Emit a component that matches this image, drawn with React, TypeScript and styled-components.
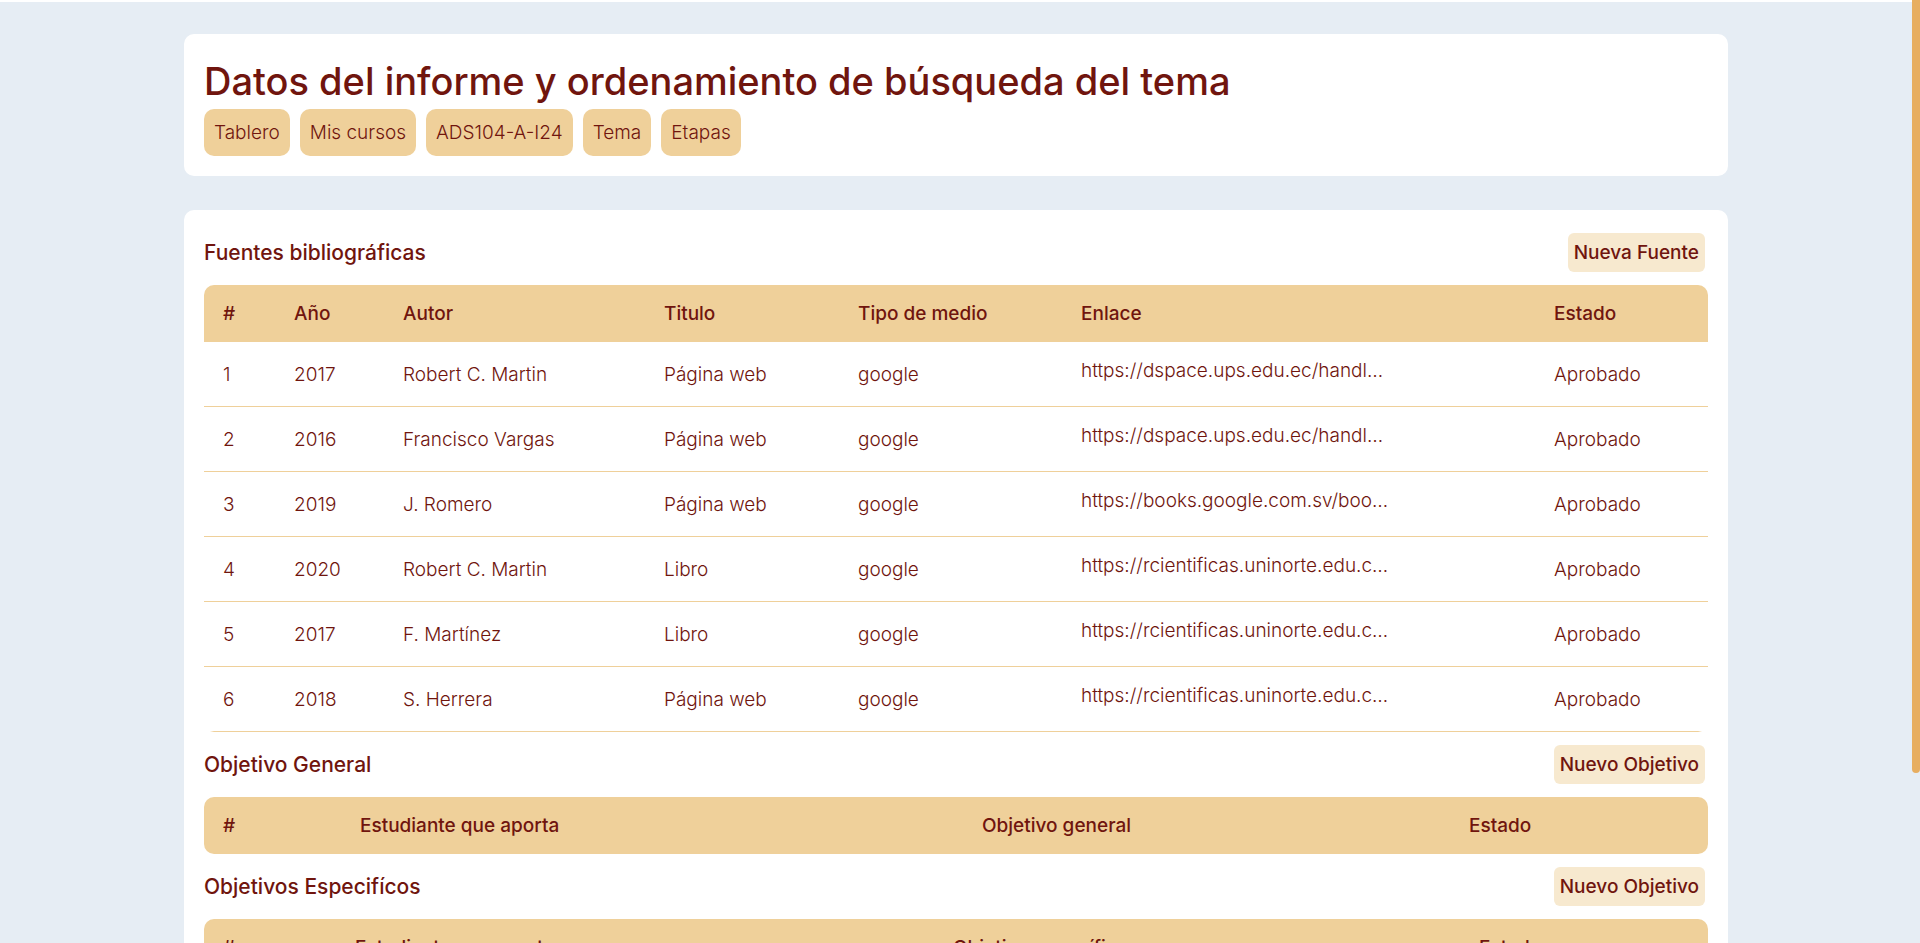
import React from "react";
import styled, { createGlobalStyle } from "styled-components";

const GlobalStyle = createGlobalStyle`
  * {
    box-sizing: border-box;
  }
  body {
    margin: 0;
    background: #ffffff;
    color: #70150e;
    font-family: Inter, "Open Sans", sans-serif;
    font-size: 19px;
    font-weight: 300;
    line-height: 27px;
  }
`;

const Shell = styled.div`
  display: flex;
  height: 100vh;
  padding-top: 2px;
  background: linear-gradient(#ffffff 2px, #e6edf4 2px);
`;

const Scroller = styled.main`
  flex: 1;
  min-width: 0;
  overflow-y: auto;
  scrollbar-width: none;
  padding: 32px 24px;
`;

const ScrollRail = styled.div`
  width: 8px;
  height: 100vh;
  margin-top: -2px;
`;

const ScrollThumb = styled.div`
  height: 82%;
  border-radius: 0 0 4px 4px;
  background: #e7ae60;
`;

const Page = styled.div`
  display: flex;
  flex-direction: column;
  gap: 34px;
  max-width: 1544px;
  margin: 0 auto;
`;

const Card = styled.section<{ $compact?: boolean }>`
  padding: ${(p) => (p.$compact ? "10px 20px" : "20px")};
  border-radius: 10px;
  background: #ffffff;
`;

const Title = styled.h1`
  margin: 0;
  font-size: 38px;
  font-weight: 550;
  line-height: 55px;
`;

const Breadcrumbs = styled.nav`
  display: flex;
  flex-wrap: wrap;
  gap: 10px;
`;

const Crumb = styled.a`
  padding: 10px;
  border-radius: 10px;
  background: #efd09a;
  color: inherit;
  text-decoration: none;
`;

const SectionHead = styled.header`
  display: flex;
  align-items: center;
  justify-content: space-between;
  height: 65px;
  padding-right: 3px;
`;

const SectionTitle = styled.h2`
  margin: 0;
  font-size: 21px;
  font-weight: 500;
  line-height: 30px;
`;

const AddButton = styled.button`
  padding: 6px;
  border: 0;
  border-radius: 6px;
  background: #f7e9cf;
  color: inherit;
  font: inherit;
  font-weight: 500;
  cursor: pointer;
`;

const TableFrame = styled.div`
  overflow: hidden;
  border-radius: 10px;
`;

const Table = styled.table`
  width: 100%;
  table-layout: fixed;
  border-collapse: separate;
  border-spacing: 0;
`;

const Col = styled.col<{ $width: number }>`
  width: ${(p) => p.$width}px;
`;

const HeadCell = styled.th`
  padding: 15px 19px;
  background: #efd09a;
  font-weight: 500;
  text-align: left;
  white-space: nowrap;
`;

const Cell = styled.td`
  height: 65px;
  padding: 0 19px;
  border-bottom: 1px solid #efd09a;
  white-space: nowrap;
`;

const SourceLink = styled.a`
  display: block;
  margin-bottom: 8px;
  color: inherit;
  text-decoration: none;
`;

interface Column {
  label: string;
  width: number;
}

const sourceColumns: Column[] = [
  { label: "#", width: 71 },
  { label: "Año", width: 109 },
  { label: "Autor", width: 261 },
  { label: "Titulo", width: 194 },
  { label: "Tipo de medio", width: 223 },
  { label: "Enlace", width: 473 },
  { label: "Estado", width: 173 },
];

const generalColumns: Column[] = [
  { label: "#", width: 137 },
  { label: "Estudiante que aporta", width: 622 },
  { label: "Objetivo general", width: 487 },
  { label: "Estado", width: 258 },
];

const specificColumns: Column[] = [
  { label: "#", width: 132 },
  { label: "Estudiante que aporta", width: 598 },
  { label: "Objetivo específico", width: 526 },
  { label: "Estado", width: 248 },
];

const sources = [
  { year: 2017, author: "Robert C. Martin", title: "Página web", link: "https://dspace.ups.edu.ec/handl…" },
  { year: 2016, author: "Francisco Vargas", title: "Página web", link: "https://dspace.ups.edu.ec/handl…" },
  { year: 2019, author: "J. Romero", title: "Página web", link: "https://books.google.com.sv/boo…" },
  { year: 2020, author: "Robert C. Martin", title: "Libro", link: "https://rcientificas.uninorte.edu.c…" },
  { year: 2017, author: "F. Martínez", title: "Libro", link: "https://rcientificas.uninorte.edu.c…" },
  { year: 2018, author: "S. Herrera", title: "Página web", link: "https://rcientificas.uninorte.edu.c…" },
];

const crumbs = ["Tablero", "Mis cursos", "ADS104-A-I24", "Tema", "Etapas"];

function DataTable({ columns, children }: { columns: Column[]; children?: React.ReactNode }) {
  return (
    <TableFrame>
      <Table>
        <colgroup>
          {columns.map((c) => (
            <Col key={c.label} $width={c.width} />
          ))}
        </colgroup>
        <thead>
          <tr>
            {columns.map((c) => (
              <HeadCell key={c.label} scope="col">
                {c.label}
              </HeadCell>
            ))}
          </tr>
        </thead>
        {children && <tbody>{children}</tbody>}
      </Table>
    </TableFrame>
  );
}

function Heading({ title, action }: { title: string; action: string }) {
  return (
    <SectionHead>
      <SectionTitle>{title}</SectionTitle>
      <AddButton type="button">{action}</AddButton>
    </SectionHead>
  );
}

export default function App() {
  return (
    <>
      <GlobalStyle />
      <Shell>
        <Scroller>
          <Page>
            <Card>
              <Title>Datos del informe y ordenamiento de búsqueda del tema</Title>
              <Breadcrumbs>
                {crumbs.map((c) => (
                  <Crumb key={c} href="#">
                    {c}
                  </Crumb>
                ))}
              </Breadcrumbs>
            </Card>
            <Card $compact>
              <Heading title="Fuentes bibliográficas" action="Nueva Fuente" />
              <DataTable columns={sourceColumns}>
                {sources.map((s, i) => (
                  <tr key={i}>
                    <Cell>{i + 1}</Cell>
                    <Cell>{s.year}</Cell>
                    <Cell>{s.author}</Cell>
                    <Cell>{s.title}</Cell>
                    <Cell>google</Cell>
                    <Cell>
                      <SourceLink href="#">{s.link}</SourceLink>
                    </Cell>
                    <Cell>Aprobado</Cell>
                  </tr>
                ))}
              </DataTable>
              <Heading title="Objetivo General" action="Nuevo Objetivo" />
              <DataTable columns={generalColumns} />
              <Heading title="Objetivos Especifícos" action="Nuevo Objetivo" />
              <DataTable columns={specificColumns} />
            </Card>
          </Page>
        </Scroller>
        <ScrollRail>
          <ScrollThumb />
        </ScrollRail>
      </Shell>
    </>
  );
}
